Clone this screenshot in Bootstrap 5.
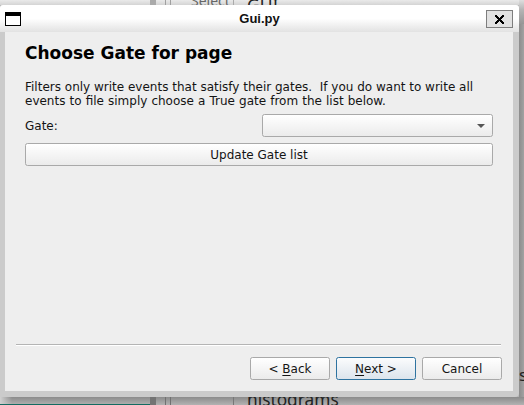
<!DOCTYPE html>
<html lang="en">
<head>
<meta charset="utf-8">
<title>Gui.py</title>
<link href="https://cdn.jsdelivr.net/npm/bootstrap@5.3.0/dist/css/bootstrap.min.css" rel="stylesheet">
<style>
body{width:524px;height:405px;background:#b3b3b3;font:12px/14px "DejaVu Sans",sans-serif;color:#141414}
.desktop{inset:0;z-index:0}
.desktop>*{position:absolute;white-space:pre}
.top-strip{left:0;top:0;width:524px;height:5px;background:linear-gradient(#eaeaea,#d4d4d4)}
.side-strip{left:519px;top:0;width:5px;height:405px;background:linear-gradient(90deg,#8c8c8c,#a2a2a2)}
.side-top{left:519px;top:0;width:5px;height:24px;background:linear-gradient(#dedede,#b5b5b5 40%,#969696)}
.low-strip{left:0;top:397px;width:524px;height:8px;background:linear-gradient(#8b8b8b,#b2b2b2)}
.low-corner{left:0;top:397px;width:12px;height:7px;background:linear-gradient(90deg,#d0d0d0,#90909000)}
.teal{left:0;top:404px;width:150px;height:1px;background:#146b61}
.bar-top{left:150px;top:0;width:6px;height:5px;background:#aaa}
.bar-low{left:150px;top:397px;width:6px;height:8px;background:#747474}
.rail{width:6px;border:solid #a0a0a0;border-width:0 1px}
.rail.t{left:165px;top:0;height:5px}
.rail.b{left:165px;top:397px;height:8px;border-color:#717171}
.edge{left:233px;width:1px;background:#aaa}
.edge.t{top:0;height:5px}
.edge.b{top:397px;height:8px;background:#777}
.ui-text{font-family:"Noto Sans",sans-serif}
.bg-select{left:191px;top:-7px;font-size:14px;line-height:16px;color:#666}
.bg-cui{left:247px;top:-5px;font-size:17.5px;line-height:20px;color:#222}
.bg-hist{left:247px;top:389px;font-size:17.3px;line-height:22px;color:#222}
.bg-s{left:519px;top:364px;font-size:17px;line-height:22px;color:#222}
.window{width:519px;height:392px;margin-top:5px;background:#cbcbcb;border-radius:3px 3px 4px 0;z-index:1;overflow:hidden}
.titlebar{height:27px;background:linear-gradient(#fff 0,#fff 50%,#e2e2e2 100%);font:bold 13px/27px "Liberation Sans",sans-serif}
.titlebar .caption{padding-left:1px;color:#111}
.win-icon{margin-left:5px;width:27px}
.close-box{width:27px;height:18px;margin-right:6px;margin-top:1px;background:#e2e2e2;border:1px solid #7e7e7e}
.client{width:508px;height:359px;margin-left:5px;background:#eee;padding:11px 20px 0}
.client h1{font-size:17px;line-height:20px;font-weight:700;color:#000}
.intro{margin-top:17px;white-space:pre}
.intro .tail{word-spacing:.27px}
.gate-row{margin-top:6px}
.qt{height:23px;border:1px solid #a9a9a9;border-radius:2.5px;background:linear-gradient(#fff,#ebebeb);font-size:12px;line-height:21px;padding:0;color:#141414}
.btn.qt{padding-top:1px;line-height:20px}
.combo{width:231px;padding-right:7px}
.update{margin-top:6px}
.rule{width:485px;height:2px;border-top:1px solid #b4b4b4;background:#fff;margin:0 -9px}
.qt.action{width:80px}
.qt.next{border-color:#2e73a0;background:linear-gradient(#fbfcfd,#dce4ec)}
.key{text-decoration:underline;text-decoration-thickness:1px;text-underline-offset:2px}
.actions{margin:11px -9px 11px 0;gap:6px}
</style>
</head>
<body class="position-relative overflow-hidden">
<div class="desktop position-absolute">
  <div class="top-strip"></div><div class="side-strip"></div><div class="side-top"></div>
  <div class="low-strip"></div><div class="low-corner"></div><div class="teal"></div>
  <div class="bar-top"></div><div class="bar-low"></div><div class="rail t"></div><div class="rail b"></div>
  <div class="edge t"></div><div class="edge b"></div>
  <div class="ui-text bg-select">Select</div><div class="ui-text bg-cui">GUI</div>
  <div class="ui-text bg-hist">histograms</div><div class="ui-text bg-s">s</div>
</div>
<main class="window position-relative d-flex flex-column">
  <header class="titlebar d-flex align-items-center">
    <svg class="win-icon flex-shrink-0" height="14" viewBox="0 0 27 14" shape-rendering="crispEdges"><path d="M.5.5h15v13H.5z" fill="#fff" stroke="#000"/><path d="M0 0h16v4H0z"/></svg>
    <span class="caption flex-grow-1 text-center">Gui.py</span>
    <span class="close-box d-flex align-items-center justify-content-center"><svg width="9" height="9" viewBox="0 0 9 9" shape-rendering="crispEdges"><path d="M0 0h2v1h1v1h1v1h1V2h1V1h1V0h2v2H8v1H7v1H6v1h1v1h1v1h1v2H7V8H6V7H5V6H4v1H3v1H2v1H0V7h1V6h1V5h1V4H2V3H1V2H0z"/></svg></span>
  </header>
  <section class="client d-flex flex-column">
    <h1 class="mb-0">Choose Gate for page</h1>
    <p class="intro mb-0">Filters only write events that satisfy their gates.  If you do want to write all
<span class="tail">events to file simply choose a True gate from the list below.</span></p>
    <div class="d-flex align-items-center justify-content-between gate-row">
      <label>Gate:</label>
      <div class="qt combo d-flex align-items-center justify-content-end"><svg width="8" height="4" viewBox="0 0 8 4"><path d="M0 0h8L4 4z" fill="#555"/></svg></div>
    </div>
    <button class="btn qt w-100 update">Update Gate list</button>
    <div class="rule mt-auto"></div>
    <div class="actions d-flex justify-content-end">
      <button class="btn qt action">&lt; <span class="key">B</span>ack</button>
      <button class="btn qt action next"><span class="key">N</span>ext &gt;</button>
      <button class="btn qt action">Cancel</button>
    </div>
  </section>
</main>
<script src="https://cdn.jsdelivr.net/npm/bootstrap@5.3.0/dist/js/bootstrap.bundle.min.js"></script>
</body>
</html>
